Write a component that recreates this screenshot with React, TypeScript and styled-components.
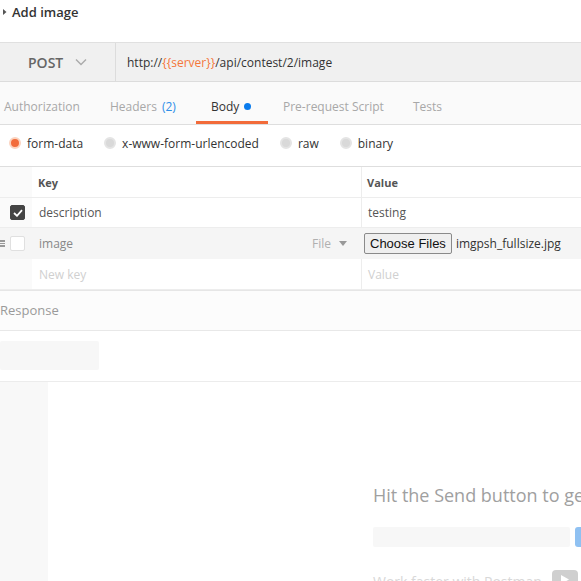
import React from "react";
import styled, { createGlobalStyle } from "styled-components";

const Global = createGlobalStyle`
  html, body { margin: 0; padding: 0; background: #fff; }
  body { font-family: "Open Sans", "Liberation Sans", sans-serif; }
  * { box-sizing: border-box; }
`;

const Page = styled.div`
  width: 581px;
  height: 581px;
  overflow: hidden;
  display: flex;
  flex-direction: column;
  background: #fff;
`;

const TitleBar = styled.div`
  height: 42px;
  display: flex;
  align-items: flex-start;
  padding: 3px 0 0 2px;
  gap: 5px;
`;

const Title = styled.span`
  font-size: 13px;
  font-weight: 600;
  color: #333;
  line-height: 18px;
`;

const RequestBar = styled.div`
  height: 40px;
  display: flex;
  background: #f0f0f0;
  border-top: 1px solid #e0e0e0;
  border-bottom: 1px solid #dcdcdc;
`;

const MethodSelect = styled.div`
  width: 116px;
  flex: none;
  display: flex;
  align-items: center;
  padding-left: 28px;
  gap: 12px;
  border-right: 1px solid #dcdcdc;
  font-size: 14px;
  font-weight: 600;
  color: #666;
`;

const UrlInput = styled.div`
  flex: 1;
  display: flex;
  align-items: center;
  padding-left: 11px;
  font-size: 12px;
  color: #333;
`;

const Var = styled.span`
  color: #f4773b;
`;

const TabsBar = styled.div`
  height: 43px;
  display: flex;
  align-items: stretch;
  background: #fafafa;
  border-bottom: 1px solid #dedede;
  margin-left: -11px;
`;

const Tab = styled.div<{ $active?: boolean; $w: number }>`
  width: ${(p) => p.$w}px;
  flex: none;
  display: flex;
  align-items: center;
  gap: 5px;
  padding: 9px 0 0 15px;
  font-size: 12px;
  white-space: nowrap;
  color: ${(p) => (p.$active ? "#333" : "#a8a8a8")};
  border-bottom: 3px solid ${(p) => (p.$active ? "#f26b3a" : "transparent")};
`;

const Count = styled.span`
  color: #2f8ee8;
`;

const Dot = styled.span`
  width: 7px;
  height: 7px;
  border-radius: 50%;
  background: #097bed;
`;

const BodyTypes = styled.div`
  height: 42px;
  display: flex;
  align-items: center;
  padding-left: 9px;
  border-bottom: 1px solid #dedede;
`;

const RadioItem = styled.label`
  display: flex;
  align-items: center;
  gap: 6px;
  margin-right: 21px;
  font-size: 12px;
  color: #333;
  padding-bottom: 4px;
`;

const RadioDot = styled.span<{ $on?: boolean }>`
  width: 12px;
  height: 12px;
  border-radius: 50%;
  background: ${(p) => (p.$on ? "#f26b3a" : "#d9d9d9")};
  border: 2px solid ${(p) => (p.$on ? "#fbd3bf" : "#e4e4e4")};
  margin-top: -2px;
`;

const Row = styled.div<{ $hover?: boolean; $h?: number }>`
  height: ${(p) => p.$h ?? 30}px;
  display: grid;
  grid-template-columns: 32px 329px 1fr;
  border-bottom: 1px solid ${(p) => (p.$hover ? "#f5f5f5" : "#ededed")};
  background: ${(p) => (p.$hover ? "#f5f5f5" : "#fff")};
`;

const CheckCell = styled.div<{ $hover?: boolean }>`
  position: relative;
  display: flex;
  align-items: center;
  padding-left: 10px;
  background: ${(p) => (p.$hover ? "#f5f5f5" : "#fafafa")};
`;

const Cell = styled.div<{ $divider?: boolean }>`
  display: flex;
  align-items: center;
  padding-left: 6px;
  padding-right: 14px;
  font-size: 12px;
  color: #555;
  border-left: 1px solid ${(p) => (p.$divider ? "#ededed" : "transparent")};
  min-width: 0;
`;

const HeadCell = styled(Cell)`
  font-size: 11px;
  font-weight: 700;
  color: #555;
  padding-left: 5px;
`;

const KeyText = styled.span<{ $muted?: boolean; $placeholder?: boolean }>`
  flex: 1;
  color: ${(p) => (p.$placeholder ? "#d0d0d0" : p.$muted ? "#888" : "#555")};
`;

const TypeSelect = styled.span`
  display: flex;
  align-items: center;
  gap: 8px;
  color: #b0b0b0;
  font-size: 12px;
`;

const Checkbox = styled.span<{ $checked?: boolean }>`
  width: 15px;
  height: 15px;
  border-radius: 2px;
  display: flex;
  align-items: center;
  justify-content: center;
  background: ${(p) => (p.$checked ? "#444" : "#fff")};
  border: 1px solid ${(p) => (p.$checked ? "#444" : "#e0e0e0")};
`;

const Handle = styled.span`
  position: absolute;
  left: 0;
  top: 12px;
  display: flex;
  flex-direction: column;
  gap: 1px;
  & > i {
    display: block;
    width: 5px;
    height: 1.5px;
    background: #999;
  }
`;

const FileButton = styled.button`
  font-family: "Liberation Sans", Arial, sans-serif;
  font-size: 13px;
  color: #111;
  background: #efefef;
  border: 1px solid #8a8a8a;
  border-radius: 2px;
  height: 21px;
  padding: 0 5px;
  margin-right: 4px;
  margin-left: -4px;
`;

const FileName = styled.span`
  font-size: 12px;
  color: #333;
`;

const ResponseHeader = styled.div`
  height: 41px;
  display: flex;
  align-items: center;
  font-size: 13px;
  color: #9a9a9a;
  background: #fcfcfc;
  border-top: 1px solid #e6e6e6;
  border-bottom: 1px solid #e8e8e8;
  padding-bottom: 1px;
`;

const MetaBar = styled.div`
  height: 51px;
  padding-top: 10px;
  border-bottom: 1px solid #ececec;
`;

const Skeleton = styled.div<{ $w: number; $h: number }>`
  width: ${(p) => p.$w}px;
  height: ${(p) => p.$h}px;
  background: #f7f7f7;
  border-radius: 2px;
  flex: none;
`;

const ResponseBody = styled.div`
  flex: 1;
  display: flex;
  min-height: 0;
`;

const Sidebar = styled.div`
  width: 48px;
  flex: none;
  background: #f8f8f8;
`;

const EmptyState = styled.div`
  flex: 1;
  display: flex;
  flex-direction: column;
  padding: 100px 0 0 325px;
  white-space: nowrap;
`;

const Hint = styled.div`
  font-size: 18px;
  color: #a0a0a0;
  line-height: 26px;
`;

const InputLine = styled.div`
  display: flex;
  gap: 5px;
  margin-top: 19px;
`;

const BlueEdge = styled.div`
  width: 20px;
  height: 20px;
  background: #8fc1f2;
  border-radius: 3px;
  flex: none;
`;

const Promo = styled.div`
  display: flex;
  align-items: center;
  gap: 10px;
  margin-top: 25px;
  font-size: 14px;
  color: #d8d8d8;
`;

const YouTube = styled.span`
  width: 26px;
  height: 20px;
  border-radius: 4px;
  background: #cfcfcf;
  display: flex;
  align-items: center;
  justify-content: center;
  margin-top: -4px;
`;

export default function App() {
  return (
    <Page>
      <Global />
      <TitleBar>
        <svg width="5" height="18" viewBox="0 0 5 18">
          <path d="M1 6 L4.5 9 L1 12 Z" fill="#555" />
        </svg>
        <Title>Add image</Title>
      </TitleBar>

      <RequestBar>
        <MethodSelect>
          POST
          <svg width="12" height="8" viewBox="0 0 12 8">
            <path d="M1 1.5 L6 6.5 L11 1.5" fill="none" stroke="#aaa" strokeWidth="1.4" />
          </svg>
        </MethodSelect>
        <UrlInput>
          http://<Var>{"{{server}}"}</Var>/api/contest/2/image
        </UrlInput>
      </RequestBar>

      <TabsBar>
        <Tab $w={106}>Authorization</Tab>
        <Tab $w={101}>
          Headers <Count>(2)</Count>
        </Tab>
        <Tab $w={72} $active>
          Body <Dot />
        </Tab>
        <Tab $w={130}>Pre-request Script</Tab>
        <Tab $w={60}>Tests</Tab>
      </TabsBar>

      <BodyTypes>
        <RadioItem>
          <RadioDot $on /> form-data
        </RadioItem>
        <RadioItem>
          <RadioDot /> x-www-form-urlencoded
        </RadioItem>
        <RadioItem>
          <RadioDot /> raw
        </RadioItem>
        <RadioItem>
          <RadioDot /> binary
        </RadioItem>
      </BodyTypes>

      <Row $h={31}>
        <CheckCell />
        <HeadCell>Key</HeadCell>
        <HeadCell $divider>Value</HeadCell>
      </Row>
      <Row>
        <CheckCell>
          <Checkbox $checked>
            <svg width="10" height="8" viewBox="0 0 10 8">
              <path d="M1 4 L4 6.8 L9 1.2" fill="none" stroke="#fff" strokeWidth="1.8" />
            </svg>
          </Checkbox>
        </CheckCell>
        <Cell>
          <KeyText>description</KeyText>
        </Cell>
        <Cell $divider>testing</Cell>
      </Row>
      <Row $hover $h={31}>
        <CheckCell $hover>
          <Handle>
            <i />
            <i />
            <i />
          </Handle>
          <Checkbox />
        </CheckCell>
        <Cell>
          <KeyText $muted>image</KeyText>
          <TypeSelect>
            File
            <svg width="8" height="5" viewBox="0 0 8 5">
              <path d="M0 0 L8 0 L4 5 Z" fill="#999" />
            </svg>
          </TypeSelect>
        </Cell>
        <Cell>
          <FileButton>Choose Files</FileButton>
          <FileName>imgpsh_fullsize.jpg</FileName>
        </Cell>
      </Row>
      <Row $h={31}>
        <CheckCell />
        <Cell>
          <KeyText $placeholder>New key</KeyText>
        </Cell>
        <Cell $divider>
          <KeyText $placeholder>Value</KeyText>
        </Cell>
      </Row>

      <ResponseHeader>Response</ResponseHeader>
      <MetaBar>
        <Skeleton $w={99} $h={29} />
      </MetaBar>
      <ResponseBody>
        <Sidebar />
        <EmptyState>
          <Hint>Hit the Send button to get a response.</Hint>
          <InputLine>
            <Skeleton $w={197} $h={20} />
            <BlueEdge />
          </InputLine>
          <Promo>
            Work faster with Postman
            <YouTube>
              <svg width="8" height="9" viewBox="0 0 8 9">
                <path d="M0 0 L8 4.5 L0 9 Z" fill="#fff" />
              </svg>
            </YouTube>
          </Promo>
        </EmptyState>
      </ResponseBody>
    </Page>
  );
}
